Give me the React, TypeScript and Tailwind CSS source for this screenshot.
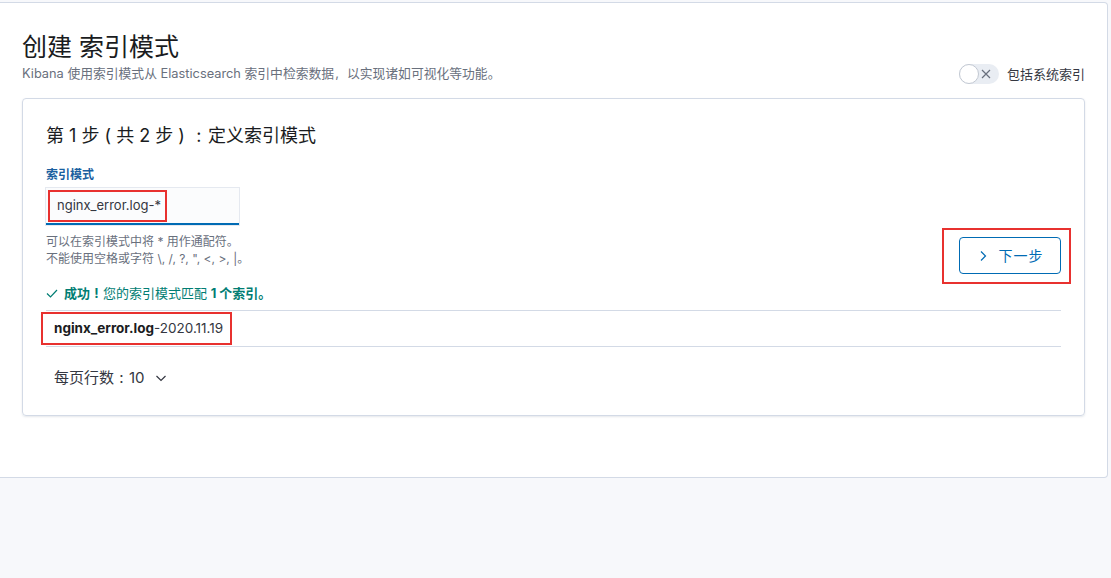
import React from "react";

const font = { fontFamily: '"Inter", "Noto Sans CJK SC", "Noto Sans", sans-serif' };

function P({ c, align = "center" }: { c: string; align?: "center" | "left" }) {
  return (
    <span className={align === "center" ? "inline-block w-[1em] text-center" : "inline-block w-[1em] text-left pl-[0.1em]"}>
      {c}
    </span>
  );
}

export default function App() {
  return (
    <div className="w-[1111px] h-[578px] bg-[#f7f8fb] overflow-hidden" style={font}>
      <div className="w-[1108px] h-[476px] mt-[2px] bg-white border border-l-0 border-[#d3dae6] rounded-r-[4px] px-[22px] pt-[28px]">
        <div className="flex items-end justify-between">
          <div>
            <h1 className="text-[25px] leading-[32px] text-[#1a1c21] font-normal">创建 索引模式</h1>
            <p className="text-[12.8px] leading-[16px] text-[#69707d] mt-[3px]">
              Kibana 使用索引模式从 Elasticsearch 索引中检索数据<P c="," align="left" />以实现诸如可视化等功能。
            </p>
          </div>
          <div className="flex items-center gap-[8px] mb-[-2px]">
            <div className="relative w-[40px] h-[20px] rounded-full bg-[#e9edf3]">
              <div className="absolute left-0 top-0 w-[20px] h-[20px] rounded-full bg-white border border-[#c2c8d2]" />
              <svg className="absolute left-[21px] top-[4px]" width="12" height="12" viewBox="0 0 12 12">
                <path d="M2 2 L10 10 M10 2 L2 10" stroke="#69707d" strokeWidth="1.2" fill="none" />
              </svg>
            </div>
            <span className="text-[13px] leading-[16px] text-[#343741]">包括系统索引</span>
          </div>
        </div>

        <div className="mt-[16px] h-[318px] border border-[#d3dae6] rounded-[4px] shadow-[0_1px_2px_rgba(152,162,179,0.25)] px-[23px] pt-[23px]">
          <div className="flex justify-between">
            <div>
              <h2 className="text-[18px] leading-[28px] text-[#1a1c21] font-normal">
                第 1 步 ( 共 2 步 ) <P c=":" />定义索引模式
              </h2>
              <div className="mt-[17px] text-[12px] leading-[16px] font-bold text-[#1a5f9f]">索引模式</div>
              <div className="relative mt-[5px] w-[193px] h-[37px] bg-[#fbfcfd] border-b-2 border-[#006bb4] shadow-[0_0_0_1px_rgba(211,218,230,0.6)] flex items-center pl-[11px] text-[13px] text-[#343741]">
                nginx_error.log-*
                <div className="absolute left-[2px] top-[2px] w-[119px] h-[32px] border-2 border-[#e8312f]" />
              </div>
              <div className="mt-[8px] text-[12px] leading-[17px] text-[#69707d]">
                <div>可以在索引模式中将 * 用作通配符。</div>
                <div>不能使用空格或字符 \, /, ?, ", &lt;, &gt;, |。</div>
              </div>
              <div className="mt-[18px] flex items-center gap-[6px] text-[13px] leading-[16px] text-[#017d73]">
                <svg width="12" height="12" viewBox="0 0 12 12">
                  <path d="M1 6.5 L4.5 10 L11 3" stroke="#017d73" strokeWidth="1.2" fill="none" />
                </svg>
                <span>
                  <b>成功<P c="!" /></b>您的索引模式匹配 <b>1 个索引。</b>
                </span>
              </div>
            </div>
            <div className="relative self-start mt-[115px]">
              <button className="w-[102px] h-[37px] border border-[#006bb4] rounded-[4px] flex items-center justify-center gap-[10px] text-[14px] text-[#006bb4] bg-white">
                <svg width="12" height="12" viewBox="0 0 12 12">
                  <path d="M4 1.5 L8.5 6 L4 10.5" stroke="#006bb4" strokeWidth="1.2" fill="none" />
                </svg>
                <span className="tracking-[1px]">下一步</span>
              </button>
              <div className="absolute left-[-17px] top-[-9px] w-[129px] h-[56px] border-2 border-[#e8312f]" />
            </div>
          </div>

          <div className="mt-[9px] border-t border-b border-[#d3dae6]">
            <div className="relative h-[35px] flex items-center pl-[8px] text-[13.5px] text-[#343741]">
              <span className="font-bold text-[#1a1c21]">nginx_error.log</span>
              <span>-2020.11.19</span>
              <div className="absolute left-[-5px] top-[1px] w-[191px] h-[33px] border-2 border-[#e8312f]" />
            </div>
          </div>

          <div className="mt-[20px] pl-[8px] flex items-center gap-[10px] text-[15px] leading-[22px] text-[#343741]">
            <span>
              每页行数<P c=":" />10
            </span>
            <svg width="12" height="12" viewBox="0 0 12 12">
              <path d="M1.5 4 L6 8.5 L10.5 4" stroke="#343741" strokeWidth="1.2" fill="none" />
            </svg>
          </div>
        </div>
      </div>
    </div>
  );
}
